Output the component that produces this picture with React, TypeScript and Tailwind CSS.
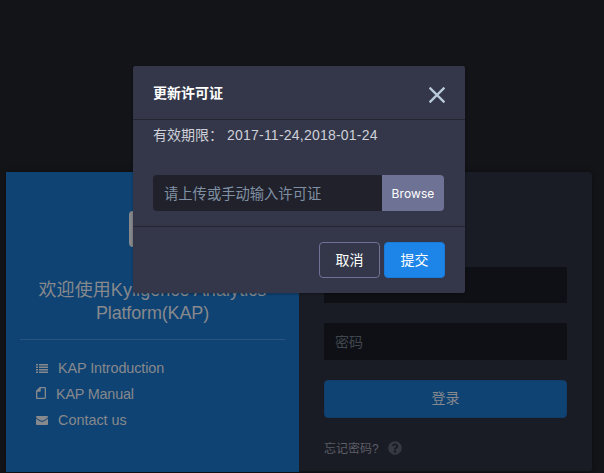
import React from 'react';
import { FaQuestionCircle } from 'react-icons/fa';

function ListIcon() {
  return (
    <svg width="12" height="9" viewBox="0 0 12 9" fill="currentColor">
      <path d="M0 0h2v1.400H0zM0 2.500h2v1.400H0zM0 5h2v1.400H0zM0 7.500h2v1.400H0zM3 0h9v1.400H3zM3 2.500h9v1.400H3zM3 5h9v1.400H3zM3 7.500h9v1.400H3z" />
    </svg>
  );
}

function FileIcon() {
  return (
    <svg className="-mt-0.5" width="10" height="12" viewBox="0 0 10 12" fill="none" stroke="currentColor" strokeWidth="1.3">
      <path d="M4 .65h4.850a.5.5 0 0 1 .5.5v9.700a.5.5 0 0 1-.5.5h-7.700a.5.5 0 0 1-.5-.5V4z" />
      <path d="M4.300.8v3.500H.7z" fill="currentColor" strokeWidth=".8" />
    </svg>
  );
}

function MailIcon() {
  return (
    <svg width="12" height="9" viewBox="0 0 12 9" fill="currentColor">
      <path d="M0 .8Q0 0 .8 0h10.400q.8 0 .8.8C12 2 8 4.800 6 4.800S0 2 0 .8z" />
      <path d="M0 2.500c2 1.800 4.500 3.400 6 3.400s4-1.600 6-3.400V8.200q0 .8-.8.8H.8Q0 9 0 8.200z" />
    </svg>
  );
}

const links = [
  { label: 'KAP Introduction', icon: <ListIcon />, tracking: 'tracking-[-0.1px]' },
  { label: 'KAP Manual', icon: <FileIcon />, tracking: 'tracking-[-0.2px]' },
  { label: 'Contact us', icon: <MailIcon />, tracking: 'tracking-normal' },
];

function Welcome() {
  return (
    <section className="flex h-[300px] w-[293px] flex-col bg-[#0f4374] px-[14px] pt-[39px] text-[#87898c]">
      <div className="ml-[109px] h-9 w-[46px] rounded-[4px] border-4 border-[#87898c]" />
      <h1 className="mt-8 text-center text-[18px] leading-[23px]">
        <span className="tracking-[0.08px]">欢迎使用Kyligence Analytics</span>
        <br />
        <span className="tracking-[-0.15px]">Platform(KAP)</span>
      </h1>
      <hr className="mt-[14px] border-[#2a547f]" />
      <ul className="mt-[15px] pl-4 text-[14.4px] leading-[26px]">
        {links.map((l) => (
          <li key={l.label} className="flex h-[26px] items-center gap-[10px]">
            {l.icon}
            <span className={l.tracking}>{l.label}</span>
          </li>
        ))}
      </ul>
    </section>
  );
}

function Login() {
  return (
    <section className="flex h-[299px] w-[293px] flex-col rounded-r-[4px] bg-[#1a1c25] pl-[25px] pt-[95px] text-[14px]">
      <div className="h-9 w-[243px] bg-[#0f1015]" />
      <div className="mt-5 flex h-[37px] w-[243px] items-center bg-[#0f1015] px-[11px] pt-px text-[#3f4650]">密码</div>
      <button className="mt-5 h-[38px] w-[243px] rounded-[4px] border border-[#113d6b] bg-[#0f4374] pb-0.5 text-[#87898c]">
        登录
      </button>
      <div className="mt-[21px] flex items-center gap-[9px] text-[12px] leading-5 text-[#5c5e65]">
        <span>忘记密码?</span>
        <FaQuestionCircle size={14} className="-mt-0.5 text-[#373942]" />
      </div>
    </section>
  );
}

function LicenseDialog() {
  return (
    <div
      role="dialog"
      className="absolute left-[133px] top-[66px] flex h-[227px] w-[332px] flex-col rounded-[2px] bg-[#333749] text-[14px] shadow-[0_1px_3px_rgba(0,0,0,0.3)]"
    >
      <header className="flex h-[54px] items-center justify-between border-b border-[#24252f] pl-5 pr-5">
        <h2 className="pt-0.5 font-bold text-white">更新许可证</h2>
        <svg className="mt-[5px]" width="16" height="16" viewBox="0 0 16 16" stroke="#b9cadb" strokeWidth="2.300">
          <path d="M.6.6l14.800 14.800M15.400.6L.6 15.400" />
        </svg>
      </header>
      <div className="flex h-[107px] flex-col border-b border-[#24252f] px-5 pt-[5px]">
        <p className="leading-5 text-[#cfd0d8]">
          <span className="mr-[4px]">有效期限：</span>
          <span className="tracking-[0.22px]">2017-11-24,2018-01-24</span>
        </p>
        <div className="mt-[30px] flex h-9 w-[291px] overflow-hidden rounded-[4px]">
          <div className="flex flex-1 items-center bg-[#20212b] pl-[11px] pt-[3px] text-[14.3px] text-[#8091a5]">
            请上传或手动输入许可证
          </div>
          <button className="w-[62px] bg-[#6e7294] pt-0.5 font-['Inter'] text-[12px] tracking-[0.1px] text-white">Browse</button>
        </div>
      </div>
      <footer className="flex flex-1 justify-end gap-1 pr-5 pt-[15px]">
        <button className="h-9 w-[61px] rounded-[4px] border border-[#6e7294] text-white">取消</button>
        <button className="h-9 w-[61px] rounded-[4px] border border-[#187ad9] bg-[#1d85e8] text-white">提交</button>
      </footer>
    </div>
  );
}

export default function App() {
  return (
    <main className="relative h-[473px] w-[604px] overflow-hidden bg-[#131418] pl-[6px] pt-[172px] font-['Liberation_Sans','Noto_Sans_CJK_SC',sans-serif]">
      <div className="flex w-[586px] rounded-[4px] shadow-[0_0_6px_rgba(0,0,0,0.35)]">
        <Welcome />
        <Login />
      </div>
      <LicenseDialog />
    </main>
  );
}
